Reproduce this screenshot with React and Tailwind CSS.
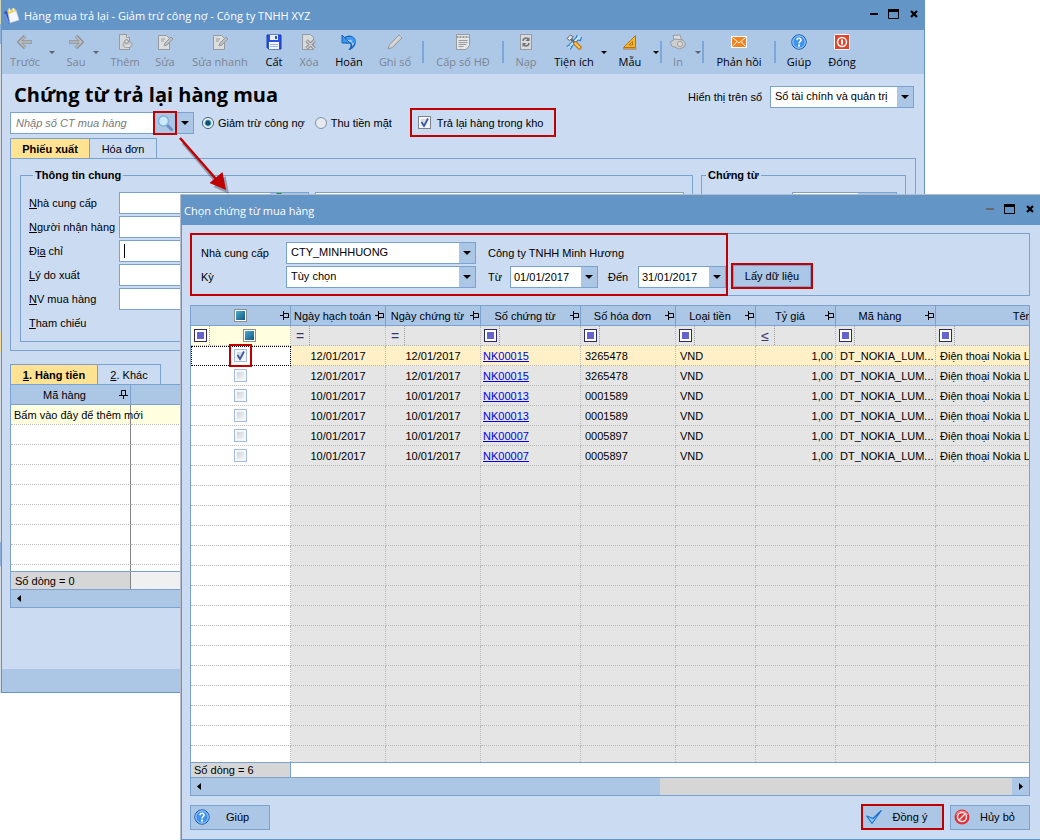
import React from "react";

/* icons---start */
const gray = { fill: "#cbcdcf", stroke: "#979b9f" };

const IconArrow = ({ flip }) => (
  <svg width="16" height="16" viewBox="0 0 16 16" className={flip ? "rotate-180" : ""}>
    <path d="M8 2L2 8l6 6M2.5 8H15" fill="none" stroke="#8f9296" strokeWidth="3.4" />
    <path d="M8 2.4L2.4 8 8 13.6M3 8h11.6" fill="none" stroke="#bcbec1" strokeWidth="1.4" />
  </svg>
);

const IconPageAdd = () => (
  <svg width="16" height="16" viewBox="0 0 16 16" {...gray}>
    <path d="M2.5 .5h7l3 3v12h-10z" fill="#d6d7d8" />
    <path d="M9.5 .5v3h3" fill="#eceded" />
    <ellipse cx="10.5" cy="10.5" rx="4.5" ry="3" />
    <circle cx="9.5" cy="7.5" r="2" />
    <path d="M8 12h5" stroke="#eee" />
  </svg>
);

const IconPageEdit = () => (
  <svg width="16" height="16" viewBox="0 0 16 16" {...gray}>
    <path d="M1.5 1.5h8l3 3v11h-11z" fill="#dcdddd" />
    <path d="M4 5h4M4 7h3" />
    <path d="M7 12l1-3 6-6 2 2-6 6z" fill="#bcbec0" />
  </svg>
);

const IconSave = () => (
  <svg width="16" height="16" viewBox="0 0 16 16">
    <path d="M1 1h14v14H2.5L1 13.500z" fill="#2a52e0" stroke="#1b35b8" />
    <rect x="4" y="1" width="8" height="5" fill="#e9eefb" />
    <rect x="9" y="2" width="2" height="3" fill="#2a52e0" />
    <rect x="3" y="8" width="10" height="7" fill="#f4f7fd" />
    <path d="M4 10.5h8M4 12.5h8" stroke="#9fb2ea" />
  </svg>
);

const IconDelete = () => (
  <svg width="16" height="16" viewBox="0 0 16 16" {...gray}>
    <path d="M1.5 .5h8l3 3v12h-11z" fill="#d9dadb" />
    <path d="M5.5 6.5l8 8M13.5 6.5l-8 8" stroke="#8a8e92" strokeWidth="3.4" />
    <path d="M5.5 6.5l8 8M13.5 6.5l-8 8" stroke="#d0d2d4" strokeWidth="1.4" />
  </svg>
);

const IconUndo = () => (
  <svg width="16" height="16" viewBox="0 0 16 16">
    <path d="M3.5 4C9 .5 14 3.5 14 8c0 3-2 5.500-5 7 2-3 2.500-8.500-4.500-6" fill="none" stroke="#1565bd" strokeWidth="1.6" />
    <path d="M5 5.5C10 2.5 13 5 12.5 9" fill="none" stroke="#3f9af0" strokeWidth="3" />
    <path d="M1 1v8h8L6.5 6.5 3.5 3.5z" fill="#3c95ea" stroke="#1565bd" />
  </svg>
);

const IconPencil = () => (
  <svg width="16" height="16" viewBox="0 0 16 16" {...gray}>
    <path d="M1 15l1.5-4.500L12 1l3 3-9.500 9.500z" />
    <path d="M4 11.5L13 2.5" stroke="#e4e5e7" />
  </svg>
);

const IconForm = () => (
  <svg width="16" height="16" viewBox="0 0 16 16" {...gray}>
    <path d="M1.5 .5h13v11l-3.500 4h-9.500z" fill="#e6e6e6" />
    <path d="M1.5 3h13" strokeWidth="2" strokeDasharray="2 1" />
    <path d="M3.5 6.5h9M3.5 8.5h9M3.5 10.5h8M3.5 12.5h5" />
  </svg>
);

const IconReload = () => (
  <svg width="16" height="16" viewBox="0 0 16 16" {...gray}>
    <rect x="2.5" y=".5" width="11" height="15" fill="#d9dadb" />
    <path d="M5 7c0-3 4-4 5.500-1.500M11 9c0 3-4 4-5.500 1.500" fill="none" stroke="#6e7276" strokeWidth="1.5" />
    <path d="M11.5 3v4h-4zM4.5 13V9h4z" fill="#6e7276" stroke="none" />
  </svg>
);

const IconTools = () => (
  <svg width="16" height="16" viewBox="0 0 16 16">
    <path d="M12.5 3.5L4 12" stroke="#2f7fc8" strokeWidth="4" />
    <path d="M11 1l-1 4.500 4.500 1L15.500 3M.500 12.500l3-1.500 2.500 2-2 2.500" fill="#b7dcf8" stroke="#2f7fc8" strokeWidth="1.2" />
    <path d="M12.5 3.5L4 12" stroke="#c6e4fb" strokeWidth="2" />
    <path d="M4 4l5 5" stroke="#5d666f" strokeWidth="2" />
    <path d="M1 4.5L4.5 1l3 2L3.500 6.500z" fill="#e3e6e9" stroke="#5d666f" />
    <path d="M9.5 9.5l4 4" stroke="#bd7310" strokeWidth="4.4" strokeLinecap="round" />
    <path d="M9.5 9.5l4 4" stroke="#ffc45a" strokeWidth="2.2" strokeLinecap="round" />
  </svg>
);

const IconRuler = () => (
  <svg width="16" height="16" viewBox="0 0 16 16">
    <path d="M13.5 1.5v12H1.500z" fill="#f8b62c" stroke="#b9730c" />
    <path d="M10.5 7.5v3.500H7z" fill="#adc7e7" stroke="#b9730c" />
    <path d="M1 15h13.500" stroke="#b9730c" />
  </svg>
);

const IconPrinter = () => (
  <svg width="16" height="16" viewBox="0 0 16 16" {...gray}>
    <path d="M3 1.5l7-.5 1.500 5-7 2z" fill="#dcdddd" />
    <path d="M.5 8L5 5l8 1 2.500 3-1 4-5 2-8-3z" />
    <circle cx="10" cy="10" r="2.5" fill="#dcdddd" />
  </svg>
);

const IconMail = () => (
  <svg width="16" height="16" viewBox="0 0 16 16">
    <rect x="0" y="2" width="16" height="12" fill="#fff" />
    <rect x="1" y="3" width="14" height="10" fill="#f5821e" />
    <path d="M1.5 3.5L8 9l6.500-5.500M1.500 12.500L6 7.500M14.500 12.500L10 7.500" fill="none" stroke="#fff" />
  </svg>
);

const IconHelp = () => (
  <svg width="16" height="16" viewBox="0 0 16 16">
    <circle cx="8" cy="8" r="7.2" fill="#3d93ee" stroke="#17569f" />
    <circle cx="8" cy="8" r="6.2" fill="none" stroke="#a9d4ff" />
    <path d="M6 6.2C6 3.5 10.2 3.700 10 6.200 9.900 7.500 8 7.600 8 9.500" fill="none" stroke="#fff" strokeWidth="1.6" />
    <rect x="7" y="10.6" width="2" height="2" fill="#fff" />
  </svg>
);

const IconClose = () => (
  <svg width="16" height="16" viewBox="0 0 16 16">
    <rect x=".5" y=".5" width="15" height="15" rx="1" fill="#e2442b" stroke="#fff" />
    <circle cx="8" cy="8" r="4.5" fill="none" stroke="#fff" strokeWidth="1.5" />
    <path d="M8 5.5v5" stroke="#fff" strokeWidth="2" />
  </svg>
);

const IconSearch = () => (
  <svg width="16" height="16" viewBox="0 0 16 16">
    <path d="M10 10l4.500 4.500" stroke="#6d8fc9" strokeWidth="3" strokeLinecap="round" />
    <circle cx="6.5" cy="6" r="5" fill="#cdeaf8" stroke="#83b4dc" strokeWidth="1.5" />
  </svg>
);

const IconOk = () => (
  <svg width="16" height="16" viewBox="0 0 16 16">
    <path d="M.7 7l5.300 7.500L15.300 1.500 7 9.500z" fill="#8ec6f8" stroke="#1670cf" strokeWidth="1.1" strokeLinejoin="round" />
  </svg>
);

const IconCancel = () => (
  <svg width="16" height="16" viewBox="0 0 16 16">
    <circle cx="8" cy="8" r="7.5" fill="#e0303a" />
    <circle cx="8" cy="8" r="4.5" fill="none" stroke="#fbe3e3" strokeWidth="1.5" />
    <path d="M4.8 11.2l6.400-6.400" stroke="#fbe3e3" strokeWidth="1.5" />
    <path d="M2 6a6.300 5.500 0 0 1 12 0" fill="none" stroke="#f4a0a4" />
  </svg>
);

const IconApp = () => (
  <svg width="16" height="16" viewBox="0 0 16 16">
    <path d="M0 4l5-2 5 12-6 1.500z" fill="#3650c4" />
    <path d="M4 5l8-3 3 10-9 3z" fill="#f2f6ff" stroke="#c3cde0" strokeWidth=".6" />
    <path d="M3 2.500l8-2 1 3-8 2.500z" fill="#e9cf5a" />
    <path d="M5 .5l1 3.500M9 0l1 3.500" stroke="#eef1f6" strokeWidth="1.5" />
    <path d="M1 6l3.500 9" stroke="#6f97ea" strokeWidth="1.5" />
  </svg>
);

const IconPin = ({ down }) => (
  <svg width="11" height="9" viewBox="0 0 11 9" className={down ? "shrink-0 -rotate-90" : "shrink-0"}>
    <path d="M1 4.5h3M4.500 0v9M5 2.500h4.500v4M5 6.500h5" fill="none" stroke="#000" />
  </svg>
);

const Caret = () => (
  <svg width="8" height="4" viewBox="0 0 8 4" className="shrink-0">
    <path d="M0 0h8L4 4z" />
  </svg>
);
/* icons---end */

/* form controls---start */
const CaretBox = () => (
  <span className="flex w-4 shrink-0 items-center justify-center bg-[#acc6e6] pointer-events-none">
    <Caret />
  </span>
);

const Combo = ({ id, value, className }) => (
  <div className={`flex h-[22px] border border-[#7ba1cf] bg-white ${className}`}>
    <select id={id} className="min-w-0 flex-1 appearance-none bg-transparent pl-1 pb-0.5 outline-none">
      <option>{value}</option>
    </select>
    <CaretBox />
  </div>
);

const DateBox = ({ id, value }) => (
  <div className="flex h-[22px] w-[88px] border border-[#7ba1cf] bg-white">
    <input id={id} defaultValue={value} className="min-w-0 flex-1 pl-[3px] outline-none" />
    <CaretBox />
  </div>
);

const CheckBox = ({ label, checked, marked, strong }) => (
  <span className="relative inline-flex">
    <input
      aria-label={label}
      type="checkbox"
      defaultChecked={checked}
      className={`size-[13px] appearance-none border bg-linear-to-br from-[#c4cad2] to-white ring-inset ring-2 ring-[#f3f6fa] ${
        strong ? "border-[#808488]" : "border-[#a5bddc]"
      }`}
    />
    {checked && (
      <svg width="13" height="13" viewBox="0 0 13 13" className="absolute pointer-events-none">
        <path d="M3.5 6l2.500 4 4-7.500" fill="none" stroke="#3a5a9c" strokeWidth="1.8" />
      </svg>
    )}
    {marked && <span className="absolute -inset-[5px] border-2 border-[#c00000] pointer-events-none" />}
  </span>
);

const TriBox = ({ label }) => (
  <input
    type="checkbox"
    aria-label={label}
    className="size-[13px] shrink-0 appearance-none border border-[#8b9095] bg-linear-to-br from-[#4fb6d8] to-[#0f4f78] ring-1 ring-inset ring-white"
  />
);

const Radio = ({ label, checked }) => (
  <label className="flex items-center gap-1 whitespace-nowrap">
    <input
      type="radio"
      name="method"
      defaultChecked={checked}
      className="size-3 appearance-none rounded-full border border-[#8493a6] bg-[#e6eaef] checked:border-[#33597f] checked:bg-[radial-gradient(circle,#10506f_0_2px,#5fb0d0_3px,#fff_4px)]"
    />
    {label}
  </label>
);
/* form controls---end */

/* window frame---start */
const WindowButtons = ({ dim }) => (
  <div className="flex items-center gap-2 pb-1">
    <button type="button" aria-label="Thu nhỏ" className="flex size-3 items-center justify-center">
      <svg width="8" height="2"><path d="M0 1h8" stroke={dim ? "#66696d" : "#000"} strokeWidth="2" /></svg>
    </button>
    <button type="button" aria-label="Phóng to">
      <svg width="12" height="10" className="block">
        <path d="M.5 .5h10v9h-10z" fill="none" stroke="#000" />
        <path d="M0 1.5h11" stroke="#000" strokeWidth="3" />
      </svg>
    </button>
    <button type="button" aria-label="Đóng" className="flex size-3 items-center justify-center">
      <svg width="8" height="8" className="block"><path d="M1 1l6 6M7 1L1 7" stroke="#000" strokeWidth="2.2" /></svg>
    </button>
  </div>
);

const TitleBar = ({ icon, title, dim }) => (
  <div className="flex h-[29px] shrink-0 items-center bg-[#6495c7] pl-0.5 pr-1 font-['Open_Sans','Noto_Sans',sans-serif] text-[11px] text-white">
    {icon}
    <span className="flex-1 whitespace-nowrap">{title}</span>
    <WindowButtons dim={dim} />
  </div>
);
/* window frame---end */

/* toolbar---start */
const tools = [
  { label: "Trước", icon: <IconArrow />, w: "w-[46px]", off: true, menu: true },
  { label: "Sau", icon: <IconArrow flip />, w: "ml-1 w-8", off: true, menu: true },
  { label: "Thêm", icon: <IconPageAdd />, w: "w-[50px]", off: true },
  { label: "Sửa", icon: <IconPageEdit />, w: "w-[30px]", off: true },
  { label: "Sửa nhanh", icon: <IconPageEdit />, w: "w-20", off: true },
  { label: "Cất", icon: <IconSave />, w: "w-7" },
  { label: "Xóa", icon: <IconDelete />, w: "w-[42px]", off: true },
  { label: "Hoãn", icon: <IconUndo />, w: "w-[38px]" },
  { label: "Ghi sổ", icon: <IconPencil />, w: "w-[54px]", off: true, sep: true },
  { label: "Cấp số HĐ", icon: <IconForm />, w: "w-[78px]", off: true, sep: true },
  { label: "Nạp", icon: <IconReload />, w: "w-11", off: true },
  { label: "Tiện ích", icon: <IconTools />, w: "w-[52px]", menu: true },
  { label: "Mẫu", icon: <IconRuler />, w: "w-11", menu: true, sep: true },
  { label: "In", icon: <IconPrinter />, w: "w-8", off: true, menu: true, sep: true },
  { label: "Phản hồi", icon: <IconMail />, w: "w-[70px]", sep: true },
  { label: "Giúp", icon: <IconHelp />, w: "w-[46px]" },
  { label: "Đóng", icon: <IconClose />, w: "w-10" },
];

const Toolbar = () => (
  <div className="flex h-11 shrink-0 items-center bg-[#adc7e7] font-['Open_Sans','Noto_Sans',sans-serif] text-[11px]">
    {tools.map((tool) => (
      <React.Fragment key={tool.label}>
        <button
          type="button"
          disabled={tool.off}
          className={`flex shrink-0 flex-col items-center gap-1 whitespace-nowrap leading-4 disabled:text-[#7c8590] ${tool.w}`}
        >
          {tool.icon}
          {tool.label}
        </button>
        {tool.menu && (
          <span className="flex w-2 shrink-0 justify-center">
            <svg width="6" height="3"><path d="M0 0h6L3 3z" fill={tool.off ? "#5d646c" : "#000"} /></svg>
          </span>
        )}
        {tool.sep && <span className="h-[22px] w-0.5 shrink-0 bg-[#7da7d9]" />}
      </React.Fragment>
    ))}
  </div>
);
/* toolbar---end */

/* main window---start */
const GroupBox = ({ title, className, children }) => (
  <fieldset className={`min-w-0 border border-[#7ba1cf] ${className}`}>
    <legend className="ml-1 px-0.5 font-bold leading-3">{title}</legend>
    {children}
  </fieldset>
);

const fields = [
  { id: "nguoi", hot: "N", tail: "gười nhận hàng" },
  { id: "diachi", pre: "Đị", hot: "a", tail: " chỉ", focus: true },
  { id: "lydo", hot: "L", tail: "ý do xuất" },
  { id: "nvmua", hot: "N", tail: "V mua hàng" },
];

const Field = ({ id, pre, hot, tail, focus, children }) => (
  <div className="flex h-6 items-center">
    <label htmlFor={id} className="w-[90px] shrink-0 whitespace-nowrap">
      {pre}
      <u>{hot}</u>
      {tail}
    </label>
    {children || (
      <div className="flex h-[22px] min-w-0 flex-1 items-center border border-[#7ba1cf] bg-white pl-1">
        {focus && <span className="h-3.5 w-px bg-black" />}
        <input id={id} className="min-w-0 flex-1 outline-none" />
      </div>
    )}
  </div>
);

const LinesGrid = () => (
  <div className="flex h-[224px] flex-col border border-[#7ba1cf] bg-white">
    <div className="min-h-0 flex-1 overflow-hidden">
      <table className="w-full table-fixed border-separate border-spacing-0">
        <colgroup>
          <col className="w-[120px]" />
          <col />
        </colgroup>
        <thead>
          <tr className="h-5 bg-[#acc6e6]">
            <th scope="col" className="border-r border-b border-[#7ba1cf] p-0 font-normal">
              <span className="flex items-center pr-px">
                <span className="flex-1">Mã hàng</span>
                <IconPin down />
              </span>
            </th>
            <td className="border-b border-[#7ba1cf] p-0" />
          </tr>
        </thead>
        <tbody>
          <tr className="h-5 bg-[#ffffe0]">
            <td className="whitespace-nowrap border-r border-b border-b-[#bdbdbd] border-r-[#858585] [border-bottom-style:dotted] p-0 pl-[3px]">
              Bấm vào đây để thêm mới
            </td>
            <td className="border-b border-dotted border-[#bdbdbd] p-0" />
          </tr>
          {Array.from({ length: 8 }, (_, i) => (
            <tr key={i} className="h-5">
              <td className="border-r border-b border-b-[#bdbdbd] border-r-[#858585] [border-bottom-style:dotted] p-0" />
              <td className="border-b border-dotted border-[#bdbdbd] p-0" />
            </tr>
          ))}
        </tbody>
      </table>
    </div>
    <div className="flex h-[18px] shrink-0 items-center border-t border-[#7ba1cf] bg-[#f0f0f0]">
      <span className="flex h-full w-[120px] items-center border-r border-[#858585] bg-[#d6d6d6] pl-1">Số dòng = 0</span>
    </div>
    <div className="flex h-[18px] shrink-0 items-center border-t border-[#7ba1cf] bg-[#acc6e6] pl-1.5">
      <svg width="4" height="7"><path d="M4 0v7L0 3.500z" /></svg>
    </div>
  </div>
);

const MainWindow = () => (
  <div className="mr-[115px] flex h-[693px] min-w-[923px] flex-1 flex-col border border-[#6595c8] border-t-[#6495c7] bg-[#cbdbf1]">
    <TitleBar
      icon={<span className="mr-1 shrink-0"><IconApp /></span>}
      title="Hàng mua trả lại - Giảm trừ công nợ - Công ty TNHH XYZ"
    />
    <Toolbar />

    <div className="flex flex-1 flex-col pl-2 pr-2">
      <div className="flex h-[34px] items-end justify-between pl-1 pr-0.5">
        <h1 className="self-center pt-2 font-['Open_Sans','Noto_Sans',sans-serif] text-[20px] font-bold leading-7 whitespace-nowrap">
          Chứng từ trả lại hàng mua
        </h1>
        <div className="flex items-center gap-2">
          <label htmlFor="so">Hiển thị trên sổ</label>
          <Combo id="so" value="Sổ tài chính và quản trị" className="w-36" />
        </div>
      </div>

      <div className="flex h-[29px] items-center">
        <div className="flex h-[22px] w-[184px] items-center border border-[#7ba1cf] bg-white">
          <input
            aria-label="Số CT mua hàng"
            placeholder="Nhập số CT mua hàng"
            className="min-w-0 flex-1 pl-[5px] italic outline-none placeholder:text-[#7a7a7a]"
          />
          <button
            type="button"
            aria-label="Tìm"
            className="flex h-6 w-6 shrink-0 items-center justify-center border-2 border-[#c00000] bg-[#acc6e6]"
          >
            <IconSearch />
          </button>
          <span className="flex h-full w-4 items-center justify-center bg-[#acc6e6]">
            <Caret />
          </span>
        </div>
        <div className="ml-2 flex items-center gap-2.5">
          <Radio label="Giảm trừ công nợ" checked />
          <Radio label="Thu tiền mặt" />
        </div>
        <label className="ml-[18px] flex h-full w-[146px] items-center gap-1.5 border-2 border-[#c00000] pl-1.5 whitespace-nowrap">
          <CheckBox checked strong />
          Trả lại hàng trong kho
        </label>
      </div>

      <div className="mt-px flex h-5">
        <button type="button" className="w-20 border border-b-0 border-[#7ba1cf] bg-[#ffe292] font-bold">Phiếu xuất</button>
        <button type="button" className="w-[67px] border border-l-0 border-b-0 border-[#7ba1cf]">Hóa đơn</button>
      </div>
      <div className="flex h-[193px] gap-2 border border-[#7ba1cf] px-[9px] pt-[10px] pb-2">
        <GroupBox title="Thông tin chung" className="flex-1 pl-2 pr-2">
          <div className="pt-[10px]">
            <Field id="ncc" hot="N" tail="hà cung cấp">
              <div className="flex h-[22px] w-[190px] border border-[#7ba1cf] bg-white">
                <input id="ncc" className="min-w-0 flex-1 outline-none" />
                <span className="flex w-[38px] justify-center bg-[#acc6e6] pr-5">
                  <svg width="6" height="12"><path d="M3 0v10" stroke="#1f9a1f" strokeWidth="5" /></svg>
                </span>
              </div>
              <input aria-label="Tên nhà cung cấp" className="ml-1.5 h-[22px] min-w-0 flex-1 border border-[#7ba1cf] bg-white" />
            </Field>
            {fields.map((f) => (
              <Field key={f.id} {...f} />
            ))}
            <div className="flex h-6 items-center">
              <span><u>T</u>ham chiếu</span>
            </div>
          </div>
        </GroupBox>
        <GroupBox title="Chứng từ" className="w-[205px] pr-2">
          <div className="flex justify-end pt-[11px]">
            <div className="flex h-[22px] w-[105px] border border-[#7ba1cf] bg-white">
              <input aria-label="Ngày chứng từ" className="min-w-0 flex-1" />
              <span className="w-[38px] bg-[#acc6e6]" />
            </div>
          </div>
        </GroupBox>
      </div>

      <div className="mt-[13px] flex h-5">
        <button type="button" className="w-[88px] border border-b-0 border-[#7ba1cf] bg-[#ffe292] font-bold"><u>1</u>. Hàng tiền</button>
        <button type="button" className="w-[63px] border border-l-0 border-b-0 border-[#7ba1cf]"><u>2</u>. Khác</button>
      </div>
      <LinesGrid />
    </div>
    <div className="h-[23px] shrink-0 bg-[#acc6e6]" />
  </div>
);
/* main window---end */

/* dialog---start */
const columns = [
  { title: "Ngày hạch toán", w: "w-[95px]", op: "=" },
  { title: "Ngày chứng từ", w: "w-[95px]", op: "=" },
  { title: "Số chứng từ", w: "w-[100px]", op: "box" },
  { title: "Số hóa đơn", w: "w-[95px]", op: "box" },
  { title: "Loại tiền", w: "w-20", op: "box" },
  { title: "Tỷ giá", w: "w-20", op: "≤" },
  { title: "Mã hàng", w: "w-[100px]", op: "box" },
  { title: "Tên hàng", w: "w-[212px]", op: "box" },
];

const rows = [
  { date: "12/01/2017", doc: "NK00015", invoice: "3265478" },
  { date: "12/01/2017", doc: "NK00015", invoice: "3265478" },
  { date: "10/01/2017", doc: "NK00013", invoice: "0001589" },
  { date: "10/01/2017", doc: "NK00013", invoice: "0001589" },
  { date: "10/01/2017", doc: "NK00007", invoice: "0005897" },
  { date: "10/01/2017", doc: "NK00007", invoice: "0005897" },
];

const cell = "overflow-hidden whitespace-nowrap border-r border-b border-dotted border-[#b9b9b9] p-0";

const Operator = ({ op }) => (
  <span className="flex h-[19px] w-[19px] shrink-0 items-center justify-center border-r border-dotted border-[#a0a0a0] text-[#3a3467]">
    {op === "box" ? (
      <svg width="13" height="13">
        <rect x=".5" y=".5" width="12" height="12" fill="#fff" stroke="#2f2a60" />
        <rect x="3" y="3" width="7" height="7" fill="#6464cc" />
      </svg>
    ) : (
      <span className="text-[14px] leading-4">{op}</span>
    )}
  </span>
);

const PickGrid = () => (
  <div className="mt-[9px] flex min-h-0 flex-1 flex-col border border-[#7ba1cf]">
    <div className="min-h-0 flex-1 overflow-hidden bg-[#e5e5e5]">
      <table className="w-[957px] table-fixed border-separate border-spacing-0">
        <colgroup>
          <col className="w-[100px]" />
          {columns.map((c) => (
            <col key={c.title} className={c.w} />
          ))}
        </colgroup>
        <thead>
          <tr className="h-5 bg-[#acc6e6]">
            <th scope="col" className="border-r border-b border-[#7ba1cf] p-0">
              <span className="flex items-center justify-end gap-8">
                <TriBox label="Chọn tất cả" />
                <IconPin />
              </span>
            </th>
            {columns.map((c) => (
              <th key={c.title} scope="col" className="border-r border-b border-[#7ba1cf] p-0 font-normal">
                <span className="flex items-center">
                  <span className="flex-1 whitespace-nowrap">{c.title}</span>
                  <IconPin />
                </span>
              </th>
            ))}
          </tr>
        </thead>
        <tbody>
          <tr className="h-5">
            <td className={`${cell} bg-[#ffffe0]`}>
              <span className="flex items-center">
                <Operator op="box" />
                <span className="flex flex-1 justify-center pr-0.5">
                  <TriBox label="Lọc dòng đã chọn" />
                </span>
              </span>
            </td>
            {columns.map((c) => (
              <td key={c.title} className={cell}>
                <Operator op={c.op} />
              </td>
            ))}
          </tr>
          {rows.map((r, i) => (
            <tr key={i} className={i === 0 ? "h-5 bg-[#fff0c8]" : "h-5"}>
              <td
                className={`border-r border-b border-dotted border-[#b9b9b9] bg-white p-0 ${
                  i === 0 ? "outline-1 -outline-offset-1 outline-dotted outline-black" : ""
                }`}
              >
                <span className="flex justify-center">
                  <CheckBox label={`Chọn dòng ${i + 1}`} checked={i === 0} marked={i === 0} />
                </span>
              </td>
              <td className={`${cell} text-center`}>{r.date}</td>
              <td className={`${cell} text-center`}>{r.date}</td>
              <td className={`${cell} pl-0.5`}>
                <a href="#" className="text-[#0000f0] underline">{r.doc}</a>
              </td>
              <td className={`${cell} pl-1`}>{r.invoice}</td>
              <td className={`${cell} pl-1`}>VND</td>
              <td className={`${cell} pr-0.5 text-right`}>1,00</td>
              <td className={`${cell} pl-1`}>DT_NOKIA_LUM...</td>
              <td className={`${cell} pl-1`}>Điện thoại Nokia Lumia</td>
            </tr>
          ))}
          {Array.from({ length: 15 }, (_, i) => (
            <tr key={i} className="h-5">
              <td className={`${cell} bg-white`} />
              {columns.map((c) => (
                <td key={c.title} className={cell} />
              ))}
            </tr>
          ))}
        </tbody>
      </table>
    </div>
    <div className="flex h-[15px] shrink-0 border-t border-[#7ba1cf] bg-white">
      <span className="flex w-[100px] items-center border-r border-[#7ba1cf] bg-[#d6d6d6] pl-[3px]">Số dòng = 6</span>
    </div>
    <div className="flex h-[18px] shrink-0 items-stretch border-t border-[#7ba1cf] bg-[#d6d6d6]">
      <span className="flex w-[56%] items-center bg-[#acc6e6] pl-1.5">
        <svg width="4" height="7"><path d="M4 0v7L0 3.500z" /></svg>
      </span>
      <span className="ml-auto flex w-[17px] items-center justify-center bg-[#acc6e6]">
        <svg width="4" height="7"><path d="M0 0v7l4-3.500z" /></svg>
      </span>
    </div>
  </div>
);

const DialogButton = ({ icon, label, className }) => (
  <button type="button" className={`flex items-center bg-[#acc6e6] ${className}`}>
    <span className="ml-[3px]">{icon}</span>
    <span className="flex-1 whitespace-nowrap pr-1 text-center">{label}</span>
  </button>
);

const Dialog = () => (
  <div
    role="dialog"
    aria-label="Chọn chứng từ mua hàng"
    className="absolute top-[195px] right-0 bottom-0 left-[181px] flex flex-col border border-r-0 border-[#6495c7] bg-[#cbdbf1] outline-1 outline-[#b4bccb]"
  >
    <TitleBar title="Chọn chứng từ mua hàng" dim />
    <div className="flex min-h-0 flex-1 flex-col pt-2 pr-[10px] pb-[9px] pl-2">
      <div className="flex h-[63px] shrink-0 border border-[#7ba1cf]">
        <div className="-m-px flex w-[538px] flex-col gap-0.5 border-2 border-[#c00000] pl-[9px] pt-[7px]">
          <div className="flex items-center">
            <label htmlFor="supplier" className="w-[85px]">Nhà cung cấp</label>
            <Combo id="supplier" value="CTY_MINHHUONG" className="w-[190px]" />
            <span className="ml-3">Công ty TNHH Minh Hương</span>
          </div>
          <div className="flex items-center">
            <label htmlFor="period" className="w-[85px]">Kỳ</label>
            <Combo id="period" value="Tùy chọn" className="w-[190px]" />
            <label htmlFor="from" className="ml-3 w-[22px]">Từ</label>
            <DateBox id="from" value="01/01/2017" />
            <label htmlFor="to" className="ml-[10px] w-[30px]">Đến</label>
            <DateBox id="to" value="31/01/2017" />
          </div>
        </div>
        <button
          type="button"
          className="mt-[29px] ml-1 h-[26px] w-[82px] border-2 border-[#c00000] bg-[#acc6e6] ring-1 ring-inset ring-[#7ba1cf]"
        >
          Lấy dữ liệu
        </button>
      </div>

      <PickGrid />

      <div className="mt-2 flex h-[26px] shrink-0 items-center justify-between">
        <DialogButton icon={<IconHelp />} label="Giúp" className="h-[25px] w-20 border border-[#7ba1cf]" />
        <div className="flex items-center gap-1.5">
          <DialogButton icon={<IconOk />} label="Đồng ý" className="h-[26px] w-[83px] border-2 border-[#c00000]" />
          <DialogButton icon={<IconCancel />} label="Hủy bỏ" className="h-[25px] w-20 border border-[#7ba1cf]" />
        </div>
      </div>
    </div>
  </div>
);
/* dialog---end */

/* callout arrow from the search button to the dialog */
const Callout = () => (
  <svg width="64" height="70" viewBox="0 0 64 70" className="absolute top-[130px] left-[172px] pointer-events-none">
    <g opacity="0.35" transform="translate(3 4)">
      <path d="M8 9l36 42" stroke="#334" strokeWidth="3" />
      <path d="M54 60l-15.500-7 12-11z" fill="#334" />
    </g>
    <path d="M8 8l36 41" stroke="#c00000" strokeWidth="2.5" />
    <path d="M54 60l-16.500-7 13-11z" fill="#c00000" />
  </svg>
);

const App = () => (
  <div className="relative min-h-screen overflow-hidden bg-white font-['Liberation_Sans',Arial,sans-serif] text-[11px] leading-[14px] text-black">
    <div className="flex">
      {/* sliver of the window underneath */}
      <div className="flex w-px shrink-0 flex-col bg-[#d5dbe2]">
        <span className="h-6 bg-[#cfd3b8]" />
        <span className="h-5 bg-[#8fb0d8]" />
        <span className="mt-72 h-5 bg-[#f0dc9c]" />
        <span className="mt-[190px] h-6 bg-[#8fb0d8]" />
      </div>
      <MainWindow />
    </div>
    <Callout />
    <Dialog />
  </div>
);

export default App;
